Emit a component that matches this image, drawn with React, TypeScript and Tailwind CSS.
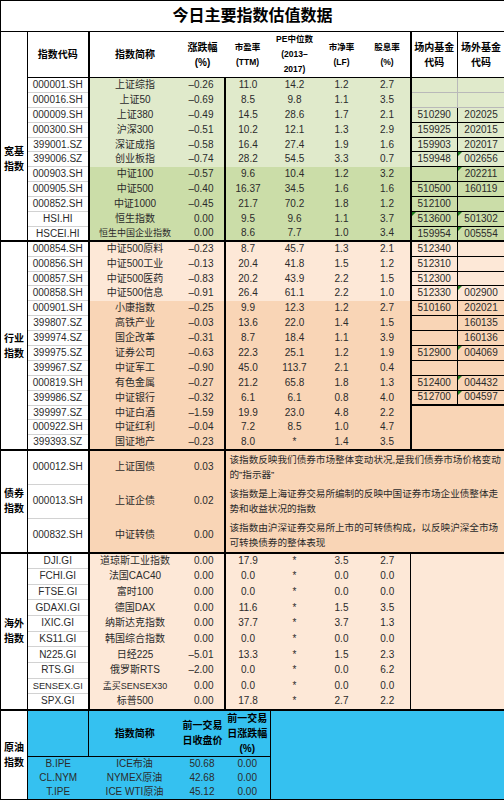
import clsx from "clsx";

// Spreadsheet-style valuation table. Column widths follow the screenshot grid.
const G1 = "bg-[#e0eacb]";
const G2 = "bg-[#cbdda8]";
const P1 = "bg-[#fde8d7]";
const P2 = "bg-[#f9d5b6]";
const CY = "bg-[#35c1f0]";

const cell = "p-0 align-middle whitespace-nowrap overflow-hidden";
const codeCell = "bg-white text-center border-r-2 border-r-black";
const catCell =
  "bg-white text-center font-bold text-black leading-[15px] border-r border-r-black border-b-2 border-b-black";
const head = "text-center font-bold text-black leading-[15px] border-b border-b-black";

const SMALL_NAMES = new Set(["恒生中国企业指数", "孟买SENSEX30"]);

// [code, name, chg, pe(ttm), pe median, pb, dividend, fund in, fund out] ("!" = green marker)
const broad: string[][] = [
  ["000001.SH", "上证综指", "–0.26", "11.0", "14.2", "1.2", "2.7", "", ""],
  ["000016.SH", "上证50", "–0.69", "8.5", "9.8", "1.1", "3.5", "", ""],
  ["000009.SH", "上证380", "–0.49", "14.5", "28.6", "1.7", "2.1", "510290", "202025"],
  ["000300.SH", "沪深300", "–0.51", "10.2", "12.1", "1.3", "2.9", "159925", "202015"],
  ["399001.SZ", "深证成指", "–0.58", "16.4", "27.4", "1.9", "1.6", "159903", "202017"],
  ["399006.SZ", "创业板指", "–0.74", "28.2", "54.5", "3.3", "0.7", "159948", "!002656"],
  ["000903.SH", "中证100", "–0.57", "9.6", "10.4", "1.2", "3.2", "", "!202211"],
  ["000905.SH", "中证500", "–0.40", "16.37", "34.5", "1.6", "1.6", "510500", "160119"],
  ["000852.SH", "中证1000", "–0.45", "21.7", "70.2", "1.8", "1.2", "512100", ""],
  ["HSI.HI", "恒生指数", "0.00", "9.5", "9.6", "1.1", "3.7", "!513600", "!501302"],
  ["HSCEI.HI", "恒生中国企业指数", "0.00", "8.6", "7.7", "1.0", "3.4", "159954", "!005554"],
];

const industry: string[][] = [
  ["000854.SH", "中证500原料", "–0.23", "8.7", "45.7", "1.3", "2.1", "512340", ""],
  ["000856.SH", "中证500工业", "–0.13", "20.4", "41.8", "1.5", "1.2", "512310", ""],
  ["000857.SH", "中证500医药", "–0.83", "20.2", "43.9", "2.2", "1.5", "512300", ""],
  ["000858.SH", "中证500信息", "–0.91", "26.4", "61.1", "2.2", "1.0", "512330", "!002900"],
  ["000901.SH", "小康指数", "–0.25", "9.9", "12.3", "1.2", "2.7", "510160", "202021"],
  ["399807.SZ", "高铁产业", "–0.03", "13.6", "22.0", "1.4", "1.5", "", "160135"],
  ["399974.SZ", "国企改革", "–0.31", "8.7", "18.4", "1.1", "3.9", "", "160136"],
  ["399975.SZ", "证券公司", "–0.63", "22.3", "25.1", "1.2", "1.9", "512900", "!004069"],
  ["399967.SZ", "中证军工", "–0.90", "45.0", "113.7", "2.1", "0.4", "", ""],
  ["000819.SH", "有色金属", "–0.27", "21.2", "65.8", "1.8", "1.3", "512400", "!004432"],
  ["399986.SZ", "中证银行", "–0.32", "6.1", "6.1", "0.8", "4.0", "512700", "!004597"],
  ["399997.SZ", "中证白酒", "–1.59", "19.9", "23.0", "4.8", "2.2"],
  ["000922.SH", "中证红利", "–0.04", "7.2", "8.5", "1.0", "4.7"],
  ["399393.SZ", "国证地产", "–0.23", "8.0", "*", "1.4", "3.5"],
];

const bonds: [string, string, string, string, string][] = [
  ["000012.SH", "上证国债", "0.03", "该指数反映我们债券市场整体变动状况,是我们债券市场价格变动", "的”指示器”"],
  ["000013.SH", "上证企债", "0.02", "该指数是上海证券交易所编制的反映中国证券市场企业债整体走", "势和收益状况的指数"],
  ["000832.SH", "中证转债", "0.00", "该指数由沪深证券交易所上市的可转债构成，以反映沪深全市场", "可转换债券的整体表现"],
];

const overseas: string[][] = [
  ["DJI.GI", "道琼斯工业指数", "0.00", "17.9", "3.5", "2.7"],
  ["FCHI.GI", "法国CAC40", "0.00", "0.0", "0.0", "0.0"],
  ["FTSE.GI", "富时100", "0.00", "0.0", "0.0", "0.0"],
  ["GDAXI.GI", "德国DAX", "0.00", "11.6", "1.5", "3.5"],
  ["IXIC.GI", "纳斯达克指数", "0.00", "37.7", "3.7", "1.3"],
  ["KS11.GI", "韩国综合指数", "0.00", "0.0", "0.0", "0.0"],
  ["N225.GI", "日经225", "–5.01", "13.3", "1.5", "2.3"],
  ["RTS.GI", "俄罗斯RTS", "–2.00", "0.0", "0.0", "6.2"],
  ["SENSEX.GI", "孟买SENSEX30", "0.00", "0.0", "0.0", "0.0"],
  ["SPX.GI", "标普500", "0.00", "17.8", "2.7", "2.2"],
];

const crude: string[][] = [
  ["B.IPE", "ICE布油", "50.68", "0.00"],
  ["CL.NYM", "NYMEX原油", "42.68", "0.00"],
  ["T.IPE", "ICE WTI原油", "45.12", "0.00"],
];

function FundCell({ v, bg, line }: { v: string; bg: string; line: string }) {
  const marked = v.startsWith("!");
  return (
    <td className={clsx(cell, bg, line, "relative text-center")}>
      {marked && (
        <span className="absolute left-0 top-0 h-0 w-0 border-t-[4px] border-r-[4px] border-t-[#1d7d1d] border-r-transparent" />
      )}
      {marked ? v.slice(1) : v}
    </td>
  );
}

function IndexSection({
  label,
  rows,
  bgFor,
  grayFundRows = 0,
  fundRows,
}: {
  label: [string, string];
  rows: string[][];
  bgFor: (i: number) => string;
  grayFundRows?: number;
  fundRows: number;
}) {
  const n = rows.length;
  return (
    <>
      {rows.map((r, i) => {
        const [code, name, chg, pe, med, pb, dy, f1 = "", f2 = ""] = r;
        const bg = bgFor(i);
        const last = i === n - 1;
        const bb = last ? "border-b-2 border-b-black" : "";
        const line = clsx(
          i < grayFundRows ? "border border-[#b9b9b9]" : "border border-black",
          i === fundRows - 1 && "border-b-2 border-b-black",
        );
        return (
          <tr key={code} className="h-[14.9px]">
            {i === 0 && (
              <td rowSpan={n} className={clsx(cell, catCell)}>
                {label[0]}
                <br />
                {label[1]}
              </td>
            )}
            <td
              className={clsx(
                cell,
                codeCell,
                last ? "border-b-2 border-b-black" : "border-b border-b-[#d2d2d2]",
              )}
            >
              {code}
            </td>
            <td className={clsx(cell, bg, "text-center", bb, SMALL_NAMES.has(name) && "text-[9px]")}>
              {name}
            </td>
            <td className={clsx(cell, bg, "text-right pr-[10px] border-r-2 border-r-black", bb)}>{chg}</td>
            <td className={clsx(cell, bg, "text-center", bb)}>{pe}</td>
            <td className={clsx(cell, bg, "text-center", bb)}>{med}</td>
            <td className={clsx(cell, bg, "text-center", bb)}>{pb}</td>
            <td className={clsx(cell, bg, "text-center border-r-2 border-r-black", bb)}>{dy}</td>
            {i < fundRows && (
              <>
                <FundCell v={f1} bg={bg} line={line} />
                <FundCell v={f2} bg={bg} line={line} />
              </>
            )}
            {i === fundRows && (
              <td colSpan={2} rowSpan={n - fundRows} className={clsx(cell, bg, "border-b-2 border-b-black")} />
            )}
          </tr>
        );
      })}
    </>
  );
}

export default function App() {
  return (
    <div className="h-[800px] w-[504px] overflow-hidden bg-[#222] font-['Liberation_Sans','Noto_Sans_CJK_SC',sans-serif] text-[10px] leading-[12px] text-[#2b2b2b]">
      <table className="w-[504px] table-fixed border-collapse border-x border-t border-b-[3px] border-black bg-white">
        <colgroup>
          <col className="w-[27px]" />
          <col className="w-[61px]" />
          <col className="w-[92px]" />
          <col className="w-[44px]" />
          <col className="w-[46px]" />
          <col className="w-[48px]" />
          <col className="w-[46px]" />
          <col className="w-[46px]" />
          <col className="w-[47px]" />
          <col className="w-[47px]" />
        </colgroup>
        <tbody>
          <tr className="h-[31px]">
            <td
              colSpan={10}
              className={clsx(cell, "text-center text-[16px] font-bold text-black border-b border-b-black")}
            >
              今日主要指数估值数据
            </td>
          </tr>

          <tr className="h-[45px]">
            <td className={clsx(cell, "bg-white border-r border-r-black")} />
            <td className={clsx(cell, head, "bg-white border-r-2 border-r-black")}>指数代码</td>
            <td className={clsx(cell, head, "bg-white")}>指数简称</td>
            <td className={clsx(cell, head, "bg-white")}>
              涨跌幅
              <br />
              (%)
            </td>
            <td className={clsx(cell, head, "bg-white text-[8.5px]")}>
              市盈率
              <br />
              (TTM)
            </td>
            <td className={clsx(cell, head, "bg-white text-[8.5px] leading-[11.5px]")}>
              PE中位数
              <br />
              (2013–
              <br />
              2017)
            </td>
            <td className={clsx(cell, head, "bg-white text-[8.5px]")}>
              市净率
              <br />
              (LF)
            </td>
            <td className={clsx(cell, head, "bg-white text-[8.5px] border-r-2 border-r-black")}>
              股息率
              <br />
              (%)
            </td>
            <td className={clsx(cell, head, "bg-white border-r border-r-black")}>
              场内基金
              <br />
              代码
            </td>
            <td className={clsx(cell, head, "bg-white")}>
              场外基金
              <br />
              代码
            </td>
          </tr>

          <IndexSection
            label={["宽基", "指数"]}
            rows={broad}
            bgFor={(i) => (i < 6 ? G1 : G2)}
            grayFundRows={2}
            fundRows={11}
          />
          <IndexSection
            label={["行业", "指数"]}
            rows={industry}
            bgFor={(i) => (i < 4 ? P1 : P2)}
            fundRows={11}
          />

          {bonds.map(([code, name, chg, l1, l2], i) => {
            const last = i === bonds.length - 1;
            const bb = last ? "border-b-2 border-b-black" : "";
            return (
              <tr key={code} className="h-[34.3px]">
                {i === 0 && (
                  <td rowSpan={3} className={clsx(cell, catCell)}>
                    债券
                    <br />
                    指数
                  </td>
                )}
                <td
                  className={clsx(
                    cell,
                    codeCell,
                    last ? "border-b-2 border-b-black" : "border-b border-b-[#d2d2d2]",
                  )}
                >
                  {code}
                </td>
                <td className={clsx(cell, P2, "text-center", bb)}>{name}</td>
                <td className={clsx(cell, P2, "text-right pr-[10px] border-r-2 border-r-black", bb)}>{chg}</td>
                <td colSpan={6} className={clsx(cell, P2, "pl-[4px] text-left text-[9.6px] leading-[15px]", bb)}>
                  {l1}
                  <br />
                  {l2}
                </td>
              </tr>
            );
          })}

          {overseas.map(([code, name, chg, pe, pb, dy], i) => {
            const last = i === overseas.length - 1;
            const bb = last ? "border-b-2 border-b-black" : "";
            return (
              <tr key={code} className="h-[15.7px]">
                {i === 0 && (
                  <td rowSpan={overseas.length} className={clsx(cell, catCell)}>
                    海外
                    <br />
                    指数
                  </td>
                )}
                <td
                  className={clsx(
                    cell,
                    codeCell,
                    code === "SENSEX.GI" && "text-[9.3px]",
                    last ? "border-b-2 border-b-black" : "border-b border-b-[#d2d2d2]",
                  )}
                >
                  {code}
                </td>
                <td className={clsx(cell, P1, "text-center", bb, SMALL_NAMES.has(name) && "text-[9px]")}>
                  {name}
                </td>
                <td className={clsx(cell, P1, "text-right pr-[10px] border-r-2 border-r-black", bb)}>{chg}</td>
                <td className={clsx(cell, P1, "text-center", bb)}>{pe}</td>
                <td className={clsx(cell, P1, "text-center", bb)}>*</td>
                <td className={clsx(cell, P1, "text-center", bb)}>{pb}</td>
                <td className={clsx(cell, P1, "text-center border-r border-r-black", bb)}>{dy}</td>
                {i === 0 && (
                  <td
                    colSpan={2}
                    rowSpan={overseas.length}
                    className={clsx(cell, P1, "border-b-2 border-b-black")}
                  />
                )}
              </tr>
            );
          })}

          <tr className="h-[45px]">
            <td rowSpan={4} className={clsx(cell, catCell, "border-b-0")}>
              原油
              <br />
              指数
            </td>
            <td className={clsx(cell, CY, "border-r border-r-black border-b border-b-black")} />
            <td className={clsx(cell, CY, head)}>指数简称</td>
            <td className={clsx(cell, CY, head)}>
              前一交易
              <br />
              日收盘价
            </td>
            <td className={clsx(cell, CY, head, "border-r border-r-black")}>
              前一交易
              <br />
              日涨跌幅
              <br />
              (%)
            </td>
            <td colSpan={5} rowSpan={4} className={clsx(cell, CY)} />
          </tr>
          {crude.map(([code, name, px, chg]) => (
            <tr key={code} className="h-[14.7px]">
              <td className={clsx(cell, CY, "text-center")}>{code}</td>
              <td className={clsx(cell, CY, "text-center")}>{name}</td>
              <td className={clsx(cell, CY, "text-right pr-[10px]")}>{px}</td>
              <td className={clsx(cell, CY, "text-center border-r border-r-black")}>{chg}</td>
            </tr>
          ))}
        </tbody>
      </table>
    </div>
  );
}
